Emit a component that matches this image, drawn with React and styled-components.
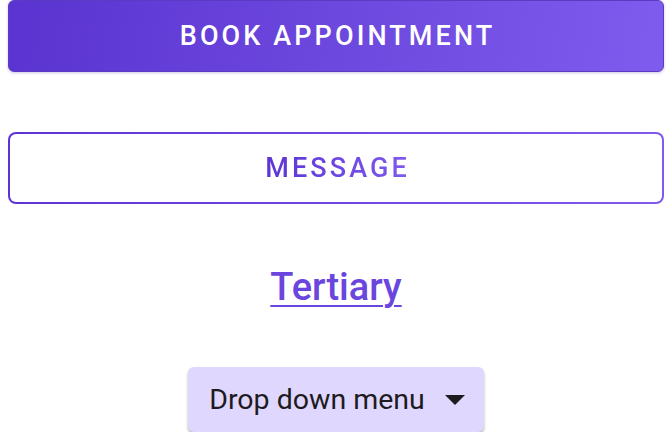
import React from "react";
import styled, { createGlobalStyle } from "styled-components";

const Global = createGlobalStyle`
  html, body { margin: 0; padding: 0; background: #ffffff; }
  body { font-family: Roboto, "Noto Sans", sans-serif; }
`;

const Page = styled.div`
  display: flex;
  flex-direction: column;
  align-items: center;
  padding: 0 8px;
  width: 672px;
  box-sizing: border-box;
`;

const PrimaryButton = styled.button`
  width: 100%;
  height: 72px;
  border: 1px solid #5a3bc4;
  border-radius: 6px;
  background: linear-gradient(100deg, #5a33d0 0%, #6d48de 50%, #7f5bee 100%);
  color: #ffffff;
  font-family: Roboto, sans-serif;
  font-size: 27px;
  font-weight: 500;
  letter-spacing: 3.1px;
  text-indent: 3.1px;
  text-transform: uppercase;
  box-sizing: border-box;
  box-shadow: 0 1px 3px rgba(60, 30, 140, 0.25);
`;

const OutlineFrame = styled.div`
  margin-top: 60px;
  width: 100%;
  height: 72px;
  padding: 2px;
  border-radius: 8px;
  background: linear-gradient(90deg, #5b34d4, #7e5aee);
  box-sizing: border-box;
`;

const OutlineButton = styled.button`
  width: 100%;
  height: 100%;
  border: none;
  border-radius: 6px;
  background: #ffffff;
  font-family: Roboto, sans-serif;
  font-size: 27px;
  font-weight: 500;
  letter-spacing: 3.1px;
  text-indent: 3.1px;
  text-transform: uppercase;
  display: flex;
  align-items: center;
  justify-content: center;
`;

const GradientText = styled.span`
  background: linear-gradient(90deg, #5b34d4, #7e5aee);
  -webkit-background-clip: text;
  background-clip: text;
  color: transparent;
`;

const TextLink = styled.a`
  margin-top: 62px;
  font-family: Roboto, sans-serif;
  font-size: 38px;
  font-weight: 500;
  color: #6a45de;
  text-decoration: underline;
  text-decoration-thickness: 2px;
  text-underline-offset: 5px;
  line-height: 42px;
  cursor: pointer;
`;

const Dropdown = styled.button`
  margin-top: 59px;
  display: flex;
  align-items: center;
  gap: 20px;
  height: 65px;
  padding: 0 19px 0 21px;
  border: none;
  border-radius: 6px;
  background: #e0d7fe;
  color: #1d1b20;
  font-family: Roboto, sans-serif;
  font-size: 28.5px;
  font-weight: 400;
  box-shadow: 0 2px 3px rgba(0, 0, 0, 0.3);
`;

const Caret = styled.svg`
  width: 20px;
  height: 10px;
  flex: none;
`;

export default function App() {
  return (
    <>
      <Global />
      <Page>
        <PrimaryButton>Book Appointment</PrimaryButton>
        <OutlineFrame>
          <OutlineButton>
            <GradientText>Message</GradientText>
          </OutlineButton>
        </OutlineFrame>
        <TextLink>Tertiary</TextLink>
        <Dropdown>
          Drop down menu
          <Caret viewBox="0 0 20 10">
            <path d="M0 0 L20 0 L10 10 Z" fill="#1d1b20" />
          </Caret>
        </Dropdown>
      </Page>
    </>
  );
}
